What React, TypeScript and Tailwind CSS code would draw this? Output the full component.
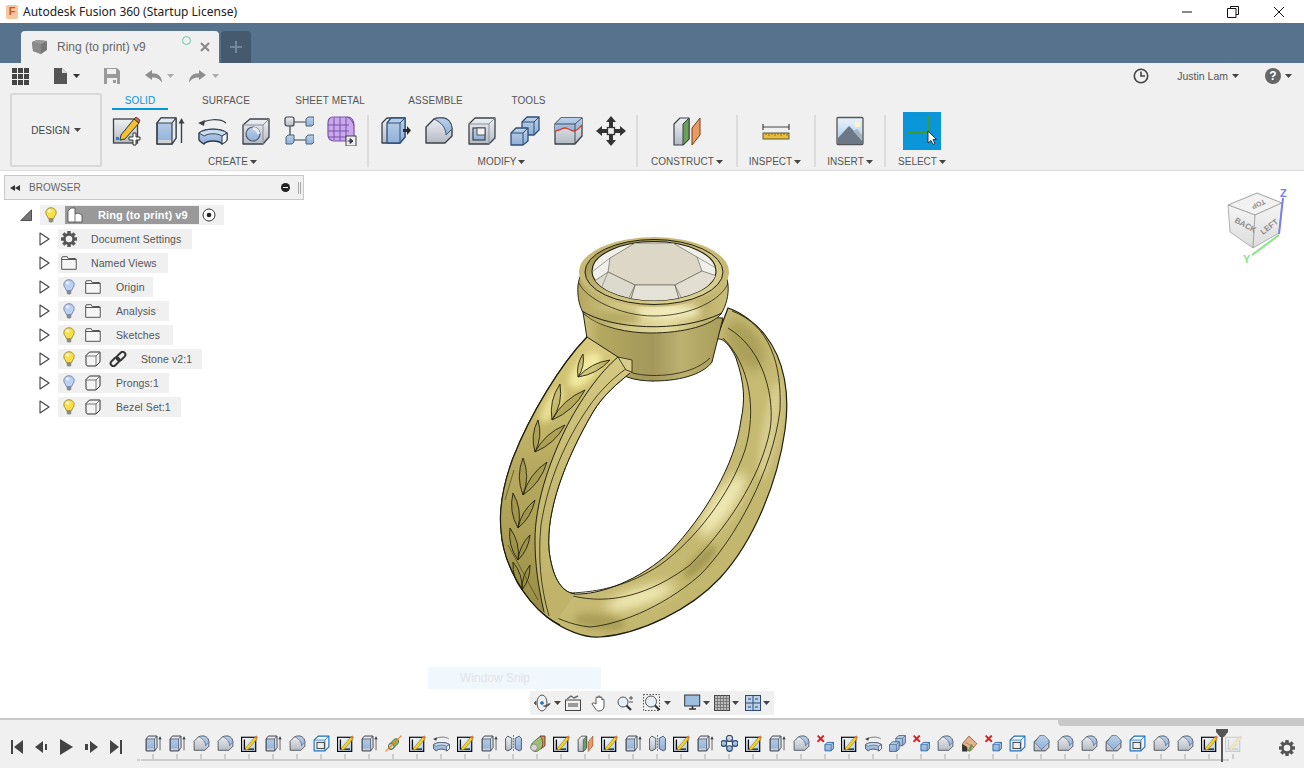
import React from "react";

const Ink = "#3c4149";
const Defs = () => (
  <svg className="absolute w-0 h-0">
    <defs>
      <linearGradient id="bl" x1="0" y1="0" x2="0" y2="1"><stop offset="0" stopColor="#bcd0e8" /><stop offset="1" stopColor="#8fb0d8" /></linearGradient>
      <linearGradient id="gy" x1="0" y1="0" x2="0" y2="1"><stop offset="0" stopColor="#eef0f3" /><stop offset="1" stopColor="#b4bac4" /></linearGradient>
      <linearGradient id="sk" x1="0" y1="0" x2="1" y2="1"><stop offset="0" stopColor="#ffffff" /><stop offset="1" stopColor="#a9c6e6" /></linearGradient>
      <linearGradient id="pic" x1="0" y1="0" x2="0" y2="1"><stop offset="0" stopColor="#e8f2fb" /><stop offset="1" stopColor="#a8c8e8" /></linearGradient>
    </defs>
  </svg>
);

const Caret = ({ c = "#444" }: { c?: string }) => (
  <svg width="7" height="4" viewBox="0 0 7 4" className="shrink-0"><path d="M0 0h7L3.5 4z" fill={c} /></svg>
);

const V = ({ s = 30, children }: { s?: number; children: React.ReactNode }) => (
  <svg width={s} height={s} viewBox="0 0 30 30" className="shrink-0">{children}</svg>
);

const Extrude = ({ s }: { s?: number }) => (
  <V s={s}>
    <path d="M2 7l4-5h15v20l-4 6H2z" fill="url(#bl)" stroke={Ink} strokeWidth="1.4" strokeLinejoin="round" />
    <path d="M17 7l4-5v20l-4 6z" fill="#e4eaf2" />
    <path d="M2 7l4-5h15l-4 5z" fill="#dfe8f3" />
    <path d="M2.8 24h14v3.4h-14z" fill="#cfd3d8" />
    <path d="M2 7l4-5h15v20l-4 6H2zM2 7h15v21M17 7l4-5" fill="none" stroke={Ink} strokeWidth="1.2" strokeLinejoin="round" />
    <path d="M26.500 27V6" stroke={Ink} strokeWidth="1.4" />
    <path d="M26.500 2l3 5.500h-6z" fill={Ink} />
  </V>
);
const Revolve = ({ s }: { s?: number }) => (
  <V s={s}>
    <path d="M3 8c5-5 19-6 25-1" fill="none" stroke={Ink} strokeWidth="1.2" />
    <path d="M0 7l7-3-1 6z" fill={Ink} />
    <path d="M1 17c6-5 22-5 28 0v7c-1 2-3 3-5 4-3-4-15-4-18 0-2-1-4-2-5-4z" fill="url(#bl)" stroke="#2f3b4d" strokeWidth="1.4" strokeLinejoin="round" />
    <path d="M1 17c6-5 22-5 28 0l-5 3c-5-3-13-3-18 0z" fill="#cbdcef" stroke="#2f3b4d" strokeWidth=".9" />
    <path d="M24 20l5-3v7c-1 2-3 3-5 4z" fill="#f3f5f8" stroke="#2f3b4d" strokeWidth="1" />
  </V>
);
const Hole = () => (
  <V>
    <path d="M2 9l7-6h19v18l-6 7H2z" fill="url(#gy)" stroke={Ink} strokeWidth="1.3" strokeLinejoin="round" />
    <path d="M2 9h20v19M22 9l6-6" fill="none" stroke="#8a9099" strokeWidth="1" />
    <circle cx="12" cy="18" r="7" fill="url(#bl)" stroke="#4d5a6d" strokeWidth="1.2" />
    <path d="M12 11c5 0 7 4 7 7h-3c0-2-2-4-4-4z" fill="#e8ebef" />
  </V>
);
const Joint = () => (
  <V>
    <path d="M8 6h16M8 24h16M6 8v14" stroke={Ink} strokeWidth="1.2" />
    <rect x="1" y="1" width="9" height="9" rx="2" fill="url(#gy)" stroke={Ink} strokeWidth="1.2" />
    <path d="M22 3l2-2h6v7l-2 2h-6z" fill="url(#bl)" stroke="#47627f" strokeWidth="1" />
    <path d="M2 21l2-2h6v7l-2 2H2z" fill="url(#bl)" stroke="#47627f" strokeWidth="1" />
    <path d="M22 21l2-2h6v7l-2 2h-6z" fill="url(#bl)" stroke="#47627f" strokeWidth="1" />
  </V>
);
const Mesh = () => (
  <V>
    <path d="M6 1h14c5 0 7 4 7 9v10l-4 5H7c-4 0-6-3-6-6V7c0-4 2-6 5-6z" fill="#c9a8ec" stroke="#7a52ab" strokeWidth="1.2" />
    <path d="M1 9h21M1 15h21M1 21h21M7 2v22M13 1v24M19 1v24M20 1c4 2 6 5 7 9" stroke="#7a52ab" strokeWidth="1" fill="none" />
    <rect x="19" y="20" width="10" height="10" fill="#eee" stroke={Ink} strokeWidth="1" />
    <path d="M20.500 25h4M23 22.500l3 2.500-3 2.500z" stroke={Ink} fill={Ink} strokeWidth="1" />
  </V>
);
const PressPull = () => (
  <V>
    <path d="M1 7l5-5h18v19l-5 6H1z" fill="url(#gy)" stroke={Ink} strokeWidth="1.3" strokeLinejoin="round" />
    <path d="M6 7l4-5h14v19l-5 6H6z" fill="url(#bl)" stroke="#2e4f78" strokeWidth="1.3" strokeLinejoin="round" />
    <path d="M6 7h13v20M19 7l5-5" fill="none" stroke="#2e4f78" strokeWidth="1" />
    <path d="M22 13h4v-3l4 4.500-4 4.500v-3h-4z" fill="#2b2b2b" />
  </V>
);
const Fillet = ({ s }: { s?: number }) => (
  <V s={s}>
    <path d="M2 27V11l8-8c2-1 5-1 8-1 6 0 10 5 10 11v7l-7 7z" fill="url(#gy)" stroke={Ink} strokeWidth="1.4" strokeLinejoin="round" />
    <path d="M10 3c2-1 5-1 8-1 6 0 10 5 10 11l-6 6c0-7-4-12-12-16z" fill="url(#bl)" stroke="#44566f" strokeWidth="1" strokeLinejoin="round" />
  </V>
);
const ShellTool = () => (
  <V>
    <path d="M2 8l6-6h20v20l-6 6H2z" fill="url(#gy)" stroke={Ink} strokeWidth="1.3" strokeLinejoin="round" />
    <path d="M2 8h20v20M22 8l6-6" fill="none" stroke="#8a9099" strokeWidth="1" />
    <rect x="6" y="12" width="12" height="12" fill="url(#bl)" stroke={Ink} strokeWidth="1.2" />
    <rect x="10" y="12" width="8" height="7" fill="#f2f2f2" stroke="#555" strokeWidth="1" />
  </V>
);
const Combine = ({ s }: { s?: number }) => (
  <V s={s}>
    <path d="M12 6l5-5h12v13l-5 5H12z" fill="url(#bl)" stroke="#2e4f78" strokeWidth="1.3" strokeLinejoin="round" />
    <path d="M1 17l5-5h12v13l-5 4H1z" fill="url(#bl)" stroke="#2e4f78" strokeWidth="1.3" strokeLinejoin="round" />
    <path d="M1 17h12v12M13 17l5-5M12 6h12v13M24 6l5-5" fill="none" stroke="#2e4f78" strokeWidth="1" />
  </V>
);
const Replace = () => (
  <V>
    <path d="M2 8l6-6h21v18l-7 8H2z" fill="url(#gy)" stroke={Ink} strokeWidth="1.3" strokeLinejoin="round" />
    <path d="M2 8l6-6h21v7c-3 3-5 6-8 6-4 0-5-3-9-3-3 0-6 3-10 3z" fill="url(#bl)" />
    <path d="M2 15c4 0 7-3 10-3 4 0 5 3 9 3 3 0 5-3 8-6" fill="none" stroke="#d0402c" strokeWidth="1.3" />
    <path d="M2 8h20v20M22 8l7-6" fill="none" stroke={Ink} strokeWidth=".9" />
  </V>
);
const Move = () => (
  <V>
    <path d="M15 0l5 6h-3v5h-4V6h-3zM15 30l5-6h-3v-5h-4v5h-3zM0 15l6-5v3h5v4H6v3zM30 15l-6-5v3h-5v4h5v3z" fill="#333" />
    <rect x="11.500" y="11.500" width="7" height="7" fill="#eee" stroke="#333" strokeWidth="1.3" />
  </V>
);
const Construct = () => (
  <V>
    <path d="M2 8l6-6h9v21l-6 6H2z" fill="url(#gy)" stroke={Ink} strokeWidth="1.2" strokeLinejoin="round" />
    <path d="M11 8l6-6v21l-6 6z" fill="#6aa05a" stroke={Ink} strokeWidth="1" />
    <path d="M20 12l8-10v17l-8 10z" fill="#ea9a62" stroke="#7a3a1a" strokeWidth="1" />
  </V>
);
const Ruler = () => (
  <V>
    <path d="M2 8v6M2 11h26M28 8v6" stroke="#444" strokeWidth="1.2" fill="none" />
    <rect x="2" y="17" width="26" height="6" fill="#e8bd3c" stroke="#5b5b3a" strokeWidth="1" />
    <path d="M5 17v2M8 17v3M11 17v2M14 17v3M17 17v2M20 17v3M23 17v2M26 17v3" stroke="#7a6420" strokeWidth=".8" />
  </V>
);
const Picture = () => (
  <V>
    <rect x="2" y="1.500" width="26" height="27" fill="url(#pic)" stroke="#555" strokeWidth="1.3" rx="1" />
    <rect x="20" y="6" width="5" height="5" fill="#fff3c0" />
    <path d="M3 22l11-12 14 14v4H3z" fill="#6d7886" />
    <path d="M18 15l4-2 5 6v6z" fill="#a8b4c0" />
  </V>
);
const SelectIcon = () => (
  <div className="relative w-[38px] h-[38px] bg-[#0b96d9]">
    <svg width="24" height="20" viewBox="0 0 24 20" className="absolute left-[4px] top-[3px]"><rect x="0.500" y="0.500" width="21" height="17" fill="none" stroke="#3f9a2e" strokeWidth="1" /></svg>
    <svg width="10" height="16" viewBox="0 0 10 16" className="absolute left-[24px] top-[18px]"><path d="M1 1v12l3-2.500 2 4 2-1-2-4h3.500z" fill="#fff" stroke="#222" strokeWidth=".9" /></svg>
  </div>
);
const SketchBig = () => (
  <V>
    <rect x="1.500" y="3" width="24" height="24" fill="url(#gy)" stroke={Ink} strokeWidth="1.3" />
    <rect x="4" y="21" width="3" height="3" fill="#2a80d0" />
    <path d="M9 19L22 3l5 4-14 16-5 1z" fill="#f1c232" stroke="#333" strokeWidth="1" strokeLinejoin="round" />
    <path d="M22 3l2-2 4 3-1 3z" fill="#d9694a" stroke="#333" strokeWidth=".8" />
    <path d="M21 17h3v4h4v3h-4v5h-3v-5h-4v-3h4z" fill="#fff" stroke="#333" strokeWidth="1" />
  </V>
);

const Sketch = ({ s = 17, faded }: { s?: number; faded?: boolean }) => (
  <V s={s}>
    <g opacity={faded ? 0.25 : 1}>
      <rect x="1" y="4" width="25" height="25" fill="url(#sk)" stroke={faded ? "#666" : "#000"} strokeWidth="2" />
      <path d="M6 8v17h17" fill="none" stroke={faded ? "#666" : "#111"} strokeWidth="2.400" />
      <path d="M8 23L24 4l4 3L13 25l-5 2z" fill="#f5d020" stroke="#7a6a10" strokeWidth=".8" />
      <path d="M24 4l3-3 3 3-2 3z" fill="#e07a3c" />
    </g>
  </V>
);
const Shell = ({ s = 17 }: { s?: number }) => (
  <V s={s}>
    <path d="M2 9l7-7h19v19l-7 7H2z" fill="#f4f7fb" stroke="#1a6fc4" strokeWidth="2" strokeLinejoin="round" />
    <path d="M2 9h19v19M21 9l7-7" fill="none" stroke="#1a6fc4" strokeWidth="1.400" />
    <rect x="7" y="13" width="13" height="11" fill="#eee" stroke="#333" strokeWidth="1.600" />
  </V>
);
const Chamfer = ({ s = 17 }: { s?: number }) => (
  <V s={s}>
    <path d="M2 12L12 2h8l8 8v12l-6 6H2z" fill="url(#gy)" stroke={Ink} strokeWidth="1.600" strokeLinejoin="round" />
    <path d="M12 2h8l8 8v4L15 27 3 14z" fill="url(#bl)" stroke="#44566f" strokeWidth="1" transform="translate(0 -1)" />
  </V>
);
const Del = ({ s = 17 }: { s?: number }) => (
  <V s={s}>
    <path d="M1 1l11 11M12 1L1 12" stroke="#d81e1e" strokeWidth="3.400" />
    <path d="M14 17l4-4h11v11l-4 4H14z" fill="url(#bl)" stroke="#2468a8" strokeWidth="1.600" strokeLinejoin="round" />
    <path d="M14 17h11v11M25 17l4-4" fill="none" stroke="#2468a8" strokeWidth="1.200" />
  </V>
);
const Mirror = ({ s = 17 }: { s?: number }) => (
  <V s={s}>
    <path d="M15 0v30" stroke="#444" strokeWidth="1.300" strokeDasharray="3 2" />
    <path d="M12 6L5 2 1 6v20l4 2 7-4z" fill="url(#gy)" stroke={Ink} strokeWidth="1.500" strokeLinejoin="round" />
    <path d="M18 6l7-4 4 4v20l-4 2-7-4z" fill="url(#bl)" stroke="#2f4a70" strokeWidth="1.500" strokeLinejoin="round" />
  </V>
);
const Pattern = ({ s = 17 }: { s?: number }) => (
  <V s={s}>
    <path d="M15 8L4 15l11 9 11-9z" fill="none" stroke="#2f4a70" strokeWidth="2" />
    <circle cx="15" cy="6" r="5.400" fill="url(#gy)" stroke="#2f4a70" strokeWidth="2" />
    <circle cx="5" cy="15" r="5" fill="url(#bl)" stroke="#2f4a70" strokeWidth="2" />
    <circle cx="25" cy="15" r="5" fill="url(#bl)" stroke="#2f4a70" strokeWidth="2" />
    <circle cx="15" cy="24" r="5" fill="url(#bl)" stroke="#2f4a70" strokeWidth="2" />
  </V>
);
const Axis = ({ s = 17 }: { s?: number }) => (
  <V s={s}>
    <path d="M7 17l9-9c4-3 8-1 8 3s-1 4-2 5l-9 9c-3 2-9 0-6-8z" fill="#8ab45e" stroke="#3f5e2b" strokeWidth="1.500" />
    <circle cx="11" cy="20" r="5" fill="#cfd5c8" stroke="#3f5e2b" strokeWidth="1.300" />
    <path d="M1 29L29 1" stroke="#e8802c" strokeWidth="2" />
  </V>
);
const Loft = ({ s = 17 }: { s?: number }) => (
  <V s={s}>
    <path d="M6 14L20 2h8v17L14 29C4 30 0 22 6 14z" fill="#9dbf73" stroke="#46602f" strokeWidth="1.400" />
    <path d="M20 2h8v17l-6 5c4-8 2-16-2-22z" fill="#c89a62" stroke="#7a2f1a" strokeWidth="1.300" />
    <circle cx="9" cy="22" r="6" fill="#d6d6d0" stroke="#777" strokeWidth="1.200" />
  </V>
);
const Plane = ({ s = 17 }: { s?: number }) => <V s={s}><path d="M2 8l6-6h9v21l-6 6H2z" fill="url(#gy)" stroke={Ink} strokeWidth="1.500" strokeLinejoin="round" /><path d="M11 8l6-6v21l-6 6z" fill="#6aa05a" stroke={Ink} strokeWidth="1" /><path d="M20 12l8-10v17l-8 10z" fill="#ea9a62" stroke="#7a3a1a" strokeWidth="1" /></V>;
const Diamond = ({ s = 17 }: { s?: number }) => (
  <V s={s}>
    <path d="M3 25V15l11-13 14 13-11 13z" fill="#e6b48c" stroke="#8a5030" strokeWidth="1.400" />
    <path d="M8 13l15 9" stroke="#8a5030" strokeWidth="1" />
    <path d="M2 16l9 5v8H2z" fill="#333" />
    <path d="M12 28l6-12 3 2-6 12z" fill="#55a050" />
  </V>
);

type Key = "e" | "f" | "sh" | "s" | "x" | "r" | "m" | "l" | "p" | "t" | "c" | "d" | "ch" | "a" | "fs";
const seq: Key[] = ["e","e","f","f","s","e","f","sh","s","e","a","s","r","s","e","m","l","s","p","s","e","m","s","e","t","s","e","f","x","s","r","c","x","f","d","x","sh","ch","f","f","ch","sh","f","f","s","fs"];
const TL = ({ k }: { k: Key }) => {
  switch (k) {
    case "e": return <Extrude s={17} />;
    case "f": return <Fillet s={17} />;
    case "sh": return <Shell />;
    case "s": return <Sketch />;
    case "fs": return <Sketch faded />;
    case "x": return <Del />;
    case "r": return <Revolve s={17} />;
    case "m": return <Mirror />;
    case "l": return <Loft />;
    case "p": return <Plane />;
    case "t": return <Pattern />;
    case "c": return <Combine s={17} />;
    case "d": return <Diamond />;
    case "ch": return <Chamfer />;
    case "a": return <Axis />;
    default: return null;
  }
};

const Bulb = ({ on }: { on: boolean }) => (
  <svg width="12" height="16" viewBox="0 0 12 16" className="shrink-0">
    <path d="M6 .7C3 .7.8 2.900.8 5.500c0 2.700 2.200 3.700 2.500 6h5.400c.3-2.300 2.500-3.300 2.500-6C11.200 2.900 9 .7 6 .7z" fill={on ? "#f8e04a" : "#bcd0f4"} stroke={on ? "#9a8a30" : "#6f80a8"} strokeWidth=".9" />
    <path d="M3.700 12h4.600v2.500L7 15.500H5L3.700 14.500z" fill="#8a8a8a" />
    <ellipse cx="4.500" cy="4" rx="1.600" ry="1.400" fill="#fff" opacity=".75" />
  </svg>
);
const Folder = () => (
  <svg width="16" height="14" viewBox="0 0 16 14" className="shrink-0"><path d="M.7 13.300V1.700c0-.6.300-1 1-1h4.500l1 1.800h7c.6 0 1 .4 1 1v9.800zM.7 3.500h14.600" fill="#f6f6f6" stroke="#444" strokeWidth=".9" /></svg>
);
const Body = () => (
  <svg width="16" height="16" viewBox="0 0 16 16" className="shrink-0"><path d="M1 4.500L4.500 1H15v10l-4 4H3c-1.200 0-2-.8-2-2z" fill="#f4f4f4" stroke="#333" strokeWidth="1" strokeLinejoin="round" /><path d="M1 5h10v10M11 5l4-4" fill="none" stroke="#555" strokeWidth=".8" /></svg>
);
const Gear = ({ s = 16, c = "#555" }: { s?: number; c?: string }) => (
  <svg width={s} height={s} viewBox="0 0 16 16" className="shrink-0">
    <g fill={c}>
      {[0, 45, 90, 135, 180, 225, 270, 315].map((a) => (<rect key={a} x="6.300" y="0" width="3.400" height="4" transform={`rotate(${a} 8 8)`} />))}
    </g>
    <circle cx="8" cy="8" r="4.600" fill="none" stroke={c} strokeWidth="2.600" />
  </svg>
);
const Link = () => (
  <svg width="18" height="16" viewBox="0 0 18 16" className="shrink-0">
    <g fill="none" stroke="#333" strokeWidth="2">
      <rect x="1" y="8" width="10" height="5.500" rx="2.750" transform="rotate(-45 6 10.750)" />
      <rect x="7" y="2.500" width="10" height="5.500" rx="2.750" transform="rotate(-45 12 5.250)" />
    </g>
  </svg>
);
const RowArrow = () => (
  <svg width="11" height="14" viewBox="0 0 11 14" className="shrink-0"><path d="M1 1l9 6-9 6z" fill="#fff" stroke="#444" strokeWidth="1.100" strokeLinejoin="round" /></svg>
);

const S1 = ({ children }: { children: React.ReactNode }) => <span className="w-[22px] flex justify-center">{children}</span>;
const S2 = ({ children }: { children: React.ReactNode }) => <span className="w-[25px] flex justify-center">{children}</span>;
const rows: { w: number; cols: React.ReactNode[]; label: string }[] = [
  { w: 134, cols: [<S1><Gear /></S1>], label: "Document Settings" },
  { w: 110, cols: [<S1><Folder /></S1>], label: "Named Views" },
  { w: 95, cols: [<S1><Bulb on={false} /></S1>, <S2><Folder /></S2>], label: "Origin" },
  { w: 111, cols: [<S1><Bulb on={false} /></S1>, <S2><Folder /></S2>], label: "Analysis" },
  { w: 115, cols: [<S1><Bulb on /></S1>, <S2><Folder /></S2>], label: "Sketches" },
  { w: 144, cols: [<S1><Bulb on /></S1>, <S2><Body /></S2>, <S2><Link /></S2>], label: "Stone v2:1" },
  { w: 111, cols: [<S1><Bulb on={false} /></S1>, <S2><Body /></S2>], label: "Prongs:1" },
  { w: 123, cols: [<S1><Bulb on /></S1>, <S2><Body /></S2>], label: "Bezel Set:1" },
];

const leaves = [
  [578, 377, 583, 354, 610, 360],
  [552, 420, 560, 384, 585, 390],
  [535, 452, 538, 420, 565, 425],
  [523, 495, 523, 458, 547, 462],
  [518, 528, 513, 493, 535, 500],
  [518, 560, 510, 528, 530, 535],
  [522, 590, 513, 562, 530, 565],
];
const leafPath = (bx: number, by: number, tx: number, ty: number, k: number) => {
  const mx = (bx + tx) / 2, my = (by + ty) / 2, dx = tx - bx, dy = ty - by;
  return `M${bx} ${by}Q${mx - dy * k} ${my + dx * k} ${tx} ${ty}Q${mx + dy * k} ${my - dx * k} ${bx} ${by}Z`;
};

const bandOuter = "M587 337C560 365 530 415 513 458C503 485 499 510 501 530C503 565 525 600 547 617C565 631 585 638 600 637C640 634 690 610 720 578C755 540 778 480 785 430C790 395 785 360 765 335C755 322 740 312 728 308L716 340Z";
const bandHole = "M716 340C722 336 730 345 736 358C745 385 745 400 741 420C735 465 705 515 670 552C640 580 600 595 575 594C560 592 552 575 549 550C546 510 565 460 593 412C603 395 618 383 630 373L653 381Z";
const leftBand = "M587 337L618 357L632 360L632 372L630 373C618 383 603 395 593 412C565 460 546 510 549 550C552 575 560 592 575 594L556 622L544 612C525 600 505 565 501 530C499 510 503 485 513 458C530 415 560 365 587 337Z";
const face = "M587 337L618 357C600 372 580 400 565 430C548 465 535 505 535 540C535 565 538 585 544 612C525 600 505 565 501 530C499 510 503 485 513 458C530 415 560 365 587 337Z";
const capD = "M578 285C577 298 580 308 584 314C600 328 630 333 650 333C685 333 712 325 721 314C726 306 729 295 728 285C725 255 690 240 653 240C615 240 582 255 578 285Z";

const Ring = () => (
  <svg width="330" height="420" viewBox="480 225 330 420" className="absolute left-[480px] top-[54px]">
    <defs>
      <linearGradient id="bandG" x1="0" y1="0" x2="1" y2="1">
        <stop offset="0" stopColor="#bcaf66" /><stop offset=".45" stopColor="#c9bc76" /><stop offset="1" stopColor="#bfb268" />
      </linearGradient>
      <linearGradient id="leftG" x1="0" y1="0" x2="0" y2="1">
        <stop offset="0" stopColor="#d6ca85" /><stop offset=".5" stopColor="#c7ba72" /><stop offset="1" stopColor="#bfb268" />
      </linearGradient>
      <linearGradient id="faceG" x1="0" y1="0" x2="0" y2="1">
        <stop offset="0" stopColor="#d9cb80" /><stop offset=".2" stopColor="#cdbf6e" /><stop offset=".45" stopColor="#b8ab61" /><stop offset=".75" stopColor="#aa9e55" /><stop offset="1" stopColor="#988c44" />
      </linearGradient>
      <linearGradient id="cupG" x1="0" y1="0" x2="1" y2="0">
        <stop offset="0" stopColor="#cfc27e" /><stop offset=".12" stopColor="#b4a860" /><stop offset=".5" stopColor="#a3975a" /><stop offset=".7" stopColor="#bdb171" /><stop offset="1" stopColor="#a89c58" />
      </linearGradient>
      <linearGradient id="capG" x1="0" y1="0" x2="1" y2="0">
        <stop offset="0" stopColor="#b3a75f" /><stop offset=".25" stopColor="#cfc381" /><stop offset=".6" stopColor="#e4dba0" /><stop offset=".85" stopColor="#bfb26d" /><stop offset="1" stopColor="#cabe7b" />
      </linearGradient>
      <linearGradient id="rimG" x1="0" y1="0" x2="1" y2="1">
        <stop offset="0" stopColor="#8f8442" /><stop offset=".5" stopColor="#cbbf7b" /><stop offset="1" stopColor="#e0d79b" />
      </linearGradient>
      <filter id="bl8" x="-50%" y="-50%" width="200%" height="200%"><feGaussianBlur stdDeviation="6" /></filter>
      <filter id="bl4" x="-50%" y="-50%" width="200%" height="200%"><feGaussianBlur stdDeviation="3" /></filter>
      <clipPath id="bandC"><path d={bandOuter + bandHole} clipRule="evenodd" /></clipPath>
      <clipPath id="faceC"><path d={face} /></clipPath>
      <clipPath id="stoneC"><ellipse cx="654" cy="271" rx="62" ry="29.500" /></clipPath>
      <clipPath id="capC"><path d={capD} /></clipPath>
    </defs>

    <path d={bandOuter + bandHole} fill="url(#bandG)" fillRule="evenodd" />
    <g clipPath="url(#bandC)">
      <ellipse cx="722" cy="505" rx="11" ry="38" transform="rotate(35 722 505)" fill="#efe9b4" filter="url(#bl8)" />
      <ellipse cx="640" cy="597" rx="36" ry="8" transform="rotate(-18 640 597)" fill="#f3edb8" filter="url(#bl8)" />
      <ellipse cx="700" cy="562" rx="22" ry="6" transform="rotate(-45 700 562)" fill="#8f8440" opacity=".6" filter="url(#bl4)" />
      <ellipse cx="745" cy="345" rx="16" ry="28" transform="rotate(-30 745 345)" fill="#8f8440" opacity=".5" filter="url(#bl8)" />
      <ellipse cx="600" cy="622" rx="26" ry="8" transform="rotate(8 600 622)" fill="#a09450" opacity=".7" filter="url(#bl4)" />
      <ellipse cx="770" cy="430" rx="8" ry="50" transform="rotate(10 770 430)" fill="#d8cd8e" filter="url(#bl4)" />
    </g>
    <path d="M723 338C750 365 757 410 745 450C730 495 695 540 660 565C630 585 600 592 570 593" fill="none" stroke="#2a2813" strokeWidth=".9" />
    <path d="M728 328C765 350 775 400 770 430C760 480 725 530 690 565C650 595 610 605 573 596" fill="none" stroke="#2a2813" strokeWidth=".9" />
    <path d="M732 311C770 325 782 365 780 410C773 470 735 540 700 575C660 610 615 625 590 627C570 625 555 617 544 612" fill="none" stroke="#2a2813" strokeWidth=".9" />
    <path d={bandOuter} fill="none" stroke="#1e1c0c" strokeWidth="1.200" />
    <path d={bandHole} fill="none" stroke="#1e1c0c" strokeWidth="1" />

    <path d="M583 312L588 345L627 377C635 380 645 381 653 381C685 381 705 372 712 362L723 318Z" fill="url(#cupG)" stroke="#23210f" strokeWidth="1" />
    <path d="M630 372C645 378 690 378 710 358" fill="none" stroke="#23210f" strokeWidth=".8" />
    <path d={capD} fill="url(#capG)" stroke="#2a2813" strokeWidth="1" />
    <g clipPath="url(#capC)">
      <ellipse cx="668" cy="312" rx="32" ry="7" fill="#f1eab9" filter="url(#bl4)" />
      <ellipse cx="612" cy="318" rx="28" ry="6" fill="#b5a963" filter="url(#bl4)" />
    </g>
    <path d="M582 311C610 329 680 334 722 313" fill="none" stroke="#23210f" strokeWidth="1" />
    <ellipse cx="654" cy="272" rx="75" ry="35" fill="#c6ba76" />
    <path d="M579 283C585 298 620 316 654 316C690 316 722 300 728 283" fill="none" stroke="#2a2813" strokeWidth=".8" />
    <ellipse cx="654" cy="272" rx="69" ry="32.500" fill="url(#rimG)" stroke="#23210f" strokeWidth="1" />
    <ellipse cx="654" cy="271" rx="62" ry="29.500" fill="#f0efe9" stroke="#1e1c0c" strokeWidth="1.100" />
    <g clipPath="url(#stoneC)">
      <path d="M610 258L635 243H673L697 257L702 271L675 285H635L608 272Z" fill="#ddd7c7" stroke="#6b6a5f" strokeWidth=".7" />
      <path d="M635 285L630 302H680L675 285Z" fill="#e5e2d7" stroke="#6b6a5f" strokeWidth=".7" />
      <path d="M608 272L590 284L605 298L630 302L635 285Z" fill="#dcd9cd" stroke="#6b6a5f" strokeWidth=".7" />
      <path d="M675 285L680 302L700 295L717 276L702 271Z" fill="#e2dfd2" stroke="#6b6a5f" strokeWidth=".7" />
      <path d="M608 272L600 291M635 285L628 300M675 285L682 299M610 258L592 272M697 257L716 268" stroke="#6b6a5f" strokeWidth=".6" />
    </g>

    <path d={leftBand} fill="url(#leftG)" />
    <path d={face} fill="url(#faceG)" />
    <g clipPath="url(#faceC)">
      <ellipse cx="585" cy="370" rx="10" ry="22" transform="rotate(40 585 370)" fill="#f2e9a0" filter="url(#bl4)" />
      <ellipse cx="552" cy="405" rx="7" ry="20" transform="rotate(30 552 405)" fill="#eadf94" filter="url(#bl4)" />
    </g>
    {leaves.map((l, i) => (
      <g key={i} fill="#8c8139" fillOpacity=".35" stroke="#23210f" strokeWidth=".9">
        <path d={leafPath(l[0], l[1], l[2], l[3], 0.2)} />
        <path d={leafPath(l[0], l[1], l[4], l[5], 0.18)} />
      </g>
    ))}
    <path d="M505 500L514 470M508 545L538 600" stroke="#3a3618" strokeWidth=".6" fill="none" />
    <path d="M587 337L618 357C600 372 580 400 565 430C548 465 535 505 535 540C535 565 538 585 544 612" fill="none" stroke="#23210f" strokeWidth="1" />
    <path d="M630 366C615 376 600 390 588 408C566 440 548 480 541 525C538 555 540 585 549 616" fill="none" stroke="#23210f" strokeWidth=".8" />
    <path d="M618 357L632 360L632 372L626 370Z" fill="#d9cd8c" stroke="#23210f" strokeWidth=".8" />
    <path d="M587 337C560 365 530 415 513 458C503 485 499 510 501 530C503 565 525 600 547 617C552 621 556 623 560 625" fill="none" stroke="#1e1c0c" strokeWidth="1.200" />
    <path d="M630 373C618 383 603 395 593 412C565 460 546 510 549 550C552 575 560 592 575 594" fill="none" stroke="#1e1c0c" strokeWidth="1" />
  </svg>
);

const Cube = () => (
  <svg width="94" height="90" viewBox="1210 180 94 90" className="absolute left-[1210px] top-[9px]">
    <defs><linearGradient id="cf" x1="0" y1="0" x2="0" y2="1"><stop offset="0" stopColor="#f5f5f5" /><stop offset="1" stopColor="#dcdcdc" /></linearGradient></defs>
    <path d="M1257 193L1282 203L1255 215L1228 205Z" fill="#f2f2f2" stroke="#8a8a8a" strokeWidth=".8" />
    <path d="M1228 205L1255 215L1253 248L1230 232Z" fill="url(#cf)" stroke="#a0a0a0" strokeWidth=".8" />
    <path d="M1282 203L1255 215L1253 248L1279 233Z" fill="url(#cf)" stroke="#a0a0a0" strokeWidth=".8" />
    <path d="M1279 234L1283 198" stroke="#7c7cf0" strokeWidth="2" />
    <path d="M1279 235L1252 255" stroke="#86e486" strokeWidth="2" />
    <text x="1280" y="197" fontSize="11" fill="#7c7cf0" fontWeight="700" fontFamily="Liberation Sans, sans-serif">Z</text>
    <text x="1243" y="263" fontSize="11" fill="#86e486" fontWeight="700" fontFamily="Liberation Sans, sans-serif">Y</text>
    <text transform="translate(1234 222) rotate(28)" fontSize="8" fontWeight="700" fill="#8c8c8c" fontFamily="Liberation Sans, sans-serif">BACK</text>
    <text transform="translate(1263 235) rotate(-38)" fontSize="8" fontWeight="700" fill="#8c8c8c" fontFamily="Liberation Sans, sans-serif">LEFT</text>
    <text transform="translate(1264 199) rotate(155)" fontSize="7" fontWeight="700" fill="#8c8c8c" fontFamily="Liberation Sans, sans-serif">TOP</text>
  </svg>
);

const Label = ({ t, cls = "" }: { t: string; cls?: string }) => (
  <div className={`mt-[5px] flex items-center justify-center gap-[2px] h-[16px] text-[10px] text-[#555] leading-none ${cls}`}><span>{t}</span><Caret /></div>
);
const Sep = ({ cls = "" }: { cls?: string }) => <div className={`mt-[2px] w-[2px] h-[52px] bg-[#dcdcdc] ${cls}`} />;
const Cell = ({ children }: { children: React.ReactNode }) => <div className="w-[43px] h-[36px] flex items-center justify-center">{children}</div>;

export default function App() {
  return (
    <div className="w-[1304px] h-[768px] flex flex-col overflow-hidden bg-white relative font-['Liberation_Sans',Arial,sans-serif]">
      <Defs />
      {/* title bar */}
      <div className="h-[23px] flex items-center bg-white shrink-0">
        <div className="ml-[6px] w-[12px] h-[14px] rounded-[2px] bg-[#f6c79d] flex items-center justify-center text-[11px] font-bold leading-none text-[#c9581c]">F</div>
        <span className="ml-[5px] text-[12px] text-[#222] font-['Noto_Sans',sans-serif] leading-none">Autodesk Fusion 360 (Startup License)</span>
        <div className="ml-auto flex items-center">
          <svg width="12" height="12" viewBox="0 0 12 12" className="mr-[34px]"><path d="M1 6h10" stroke="#111" strokeWidth="1" /></svg>
          <svg width="12" height="12" viewBox="0 0 12 12" className="mr-[34px]"><path d="M3.500 2.500V.5h8v8H9M.5 2.500h8.500v9H.5z" fill="none" stroke="#111" strokeWidth="1" /></svg>
          <svg width="12" height="12" viewBox="0 0 12 12" className="mr-[19px]"><path d="M1 1l10 10M11 1L1 11" stroke="#111" strokeWidth="1" /></svg>
        </div>
      </div>
      {/* tab bar */}
      <div className="h-[40px] bg-[#56728c] flex items-end pl-[21px] gap-[2px] shrink-0">
        <div className="w-[198px] h-[32px] bg-[#f0f0f0] rounded-t-[4px] flex items-center relative">
          <svg width="17" height="17" viewBox="0 0 17 17" className="ml-[10px]"><path d="M1 3l5-2 10 1v9l-6 4-8-3z" fill="#777" /><path d="M1 3l9 2v10L2 12z" fill="#8a8a8a" /><path d="M1 3l5-2 10 1-6 3z" fill="#999" /></svg>
          <span className="ml-[9px] text-[12px] text-[#666] leading-none">Ring (to print) v9</span>
          <div className="absolute left-[161px] top-[5px] w-[9px] h-[9px] rounded-full border border-[#62c9a8]" />
          <svg width="10" height="10" viewBox="0 0 10 10" className="absolute left-[179px] top-[11px]"><path d="M1 1l8 8M9 1L1 9" stroke="#8a8a8a" strokeWidth="2.200" /></svg>
        </div>
        <div className="w-[30px] h-[32px] bg-[#45596f] rounded-t-[4px] flex items-center justify-center">
          <svg width="12" height="12" viewBox="0 0 12 12"><path d="M6 0v12M0 6h12" stroke="#74869a" strokeWidth="2" /></svg>
        </div>
      </div>
      {/* quick access */}
      <div className="h-[30px] bg-[#f0f0f0] flex items-center pb-[4px] shrink-0">
        <div className="ml-[12px] grid grid-cols-3 gap-[1px] w-[17px]">
          {Array.from({ length: 9 }).map((_, i) => <div key={i} className="w-[5px] h-[5px] bg-[#444]" />)}
        </div>
        <svg width="13" height="16" viewBox="0 0 13 16" className="ml-[25px]"><path d="M0 0h8l5 5v11H0z" fill="#555" /><path d="M8 0v5h5" fill="#ddd" /></svg>
        <span className="ml-[6px]"><Caret c="#333" /></span>
        <svg width="16" height="16" viewBox="0 0 16 16" className="ml-[24px]"><path d="M0 0h13l3 3v13H0z" fill="#9a9a9a" /><rect x="3" y="1" width="9" height="5" fill="#f0f0f0" /><rect x="3" y="10" width="10" height="6" fill="#f0f0f0" /><rect x="9" y="12" width="3" height="3" fill="#9a9a9a" /></svg>
        <svg width="17" height="13" viewBox="0 0 17 13" className="ml-[25px]"><path d="M0 5l7-5v3.200c6 0 10 3 10 9.800-2-4-5-5.500-10-5.500V10z" fill="#8e8e8e" /></svg>
        <span className="ml-[5px]"><Caret c="#aaa" /></span>
        <svg width="17" height="13" viewBox="0 0 17 13" className="ml-[15px]"><path d="M17 5l-7-5v3.200C4 3.200 0 6.200 0 13c2-4 5-5.500 10-5.500V10z" fill="#8e8e8e" /></svg>
        <span className="ml-[6px]"><Caret c="#aaa" /></span>
        <div className="ml-auto flex items-center">
          <svg width="16" height="16" viewBox="0 0 16 16" className="mr-[-1px]"><circle cx="8" cy="8" r="6.700" fill="none" stroke="#444" strokeWidth="1.600" /><path d="M8 3.500V8h4" fill="none" stroke="#444" strokeWidth="1.600" /></svg>
          <span className="ml-[29px] text-[10.5px] text-[#555] leading-none">Justin Lam</span>
          <span className="ml-[4px]"><Caret /></span>
          <div className="ml-[26px] w-[16px] h-[16px] rounded-full bg-[#666] text-white text-[12px] font-bold flex items-center justify-center leading-none">?</div>
          <span className="ml-[4px] mr-[12px]"><Caret /></span>
        </div>
      </div>
      {/* ribbon */}
      <div className="h-[78px] bg-[#f0f0f0] border-b border-[#dcdcdc] flex pl-[10px] shrink-0">
        <div className="w-[92px] h-[74px] border-2 border-[#d8d8d8] rounded-[2px] flex items-center justify-center gap-[4px] text-[10px] text-[#444] font-medium">DESIGN<Caret /></div>
        <div className="ml-[3px] flex flex-col">
          <div className="h-[17px] flex items-start text-[10px] text-[#555] leading-none tracking-[0.1px]">
            <div className="ml-[7px] w-[56px] h-[17px] text-center pt-[3px] text-[#0696d7] border-b-2 border-[#0696d7]">SOLID</div>
            <div className="ml-[30px] w-[56px] text-center pt-[3px]">SURFACE</div>
            <div className="ml-[38px] w-[76px] text-center pt-[3px]">SHEET METAL</div>
            <div className="ml-[36px] w-[63px] text-center pt-[3px]">ASSEMBLE</div>
            <div className="ml-[40px] w-[43px] text-center pt-[3px]">TOOLS</div>
          </div>
          <div className="flex items-start mt-[3px]">
            <div className="w-[258px]">
              <div className="flex">
                <Cell><SketchBig /></Cell><Cell><Extrude /></Cell><Cell><Revolve /></Cell><Cell><Hole /></Cell><Cell><Joint /></Cell><Cell><Mesh /></Cell>
              </div>
              <Label t="CREATE" cls="pr-[3px]" />
            </div>
            <Sep cls="ml-[4px]" />
            <div className="ml-[5px] w-[258px]">
              <div className="flex">
                <Cell><PressPull /></Cell><Cell><Fillet /></Cell><Cell><ShellTool /></Cell><Cell><Combine /></Cell><Cell><Replace /></Cell><Cell><Move /></Cell>
              </div>
              <Label t="MODIFY" cls="pr-[3px]" />
            </div>
            <Sep cls="ml-[4px]" />
            <div className="w-[98px]"><div className="h-[36px] flex items-center justify-center"><Construct /></div><Label t="CONSTRUCT" /></div>
            <Sep />
            <div className="w-[76px]"><div className="h-[36px] flex items-center justify-center"><Ruler /></div><Label t="INSPECT" cls="pr-[2px]" /></div>
            <Sep />
            <div className="w-[68px]"><div className="h-[36px] flex items-center justify-center"><Picture /></div><Label t="INSERT" /></div>
            <Sep />
            <div className="w-[72px]"><div className="h-[36px] flex items-center justify-center"><SelectIcon /></div><Label t="SELECT" /></div>
          </div>
        </div>
      </div>
      {/* canvas */}
      <div className="relative flex-1 bg-white">
        <div className="ml-[4px] mt-[4px] w-[300px] h-[25px] border border-[#c8c8c8] bg-[#f0f0f0] flex items-center text-[10px] text-[#666]">
          <svg width="10" height="6" viewBox="0 0 10 6" className="ml-[5px]"><path d="M5 0v6L0 3zM10 0v6L5 3z" fill="#333" /></svg>
          <span className="ml-[9px]">BROWSER</span>
          <div className="ml-auto w-[9px] h-[9px] rounded-full bg-[#222] flex items-center justify-center"><div className="w-[5px] h-[1px] bg-white" /></div>
          <div className="ml-[8px] mr-[2px] w-[3px] h-[12px] border-x border-[#aaa]" />
        </div>
        <div className="flex flex-col gap-[4px] mt-[5px] text-[10.5px] text-[#555] leading-none tracking-[0.1px]">
          <div className="h-[20px] flex items-center">
            <svg width="12" height="12" viewBox="0 0 12 12" className="ml-[20px]"><path d="M11.500 .8v10.700H.8z" fill="#777" stroke="#333" strokeWidth=".8" /></svg>
            <div className="ml-[8px] w-[184px] h-[20px] bg-[#f0f0f0] flex items-center">
              <span className="w-[22px] flex justify-center"><Bulb on /></span>
              <div className="ml-[3px] w-[134px] h-[18px] bg-[#999] flex items-center text-white font-bold text-[11px]">
                <svg width="16" height="16" viewBox="0 0 16 16" className="ml-[2px]"><path d="M1 15V4l3-3h4v6l3-1 4 2v7z" fill="#fff" stroke="#555" strokeWidth=".9" /><path d="M8 7v8" stroke="#555" strokeWidth=".8" /></svg>
                <span className="ml-[15px] whitespace-nowrap">Ring (to print) v9</span>
              </div>
              <svg width="14" height="14" viewBox="0 0 14 14" className="ml-[3px]"><circle cx="7" cy="7" r="6" fill="#fff" stroke="#333" strokeWidth="1" /><circle cx="7" cy="7" r="2.300" fill="#222" /></svg>
            </div>
          </div>
          {rows.map((r) => (
            <div key={r.label} className="h-[20px] flex items-center">
              <span className="ml-[39px] w-[11px] flex"><RowArrow /></span>
              <div style={{ width: r.w }} className="ml-[8px] h-[20px] bg-[#f0f0f0] flex items-center">
                {r.cols.map((c, i) => <React.Fragment key={i}>{c}</React.Fragment>)}
                <span className="ml-[11px] whitespace-nowrap">{r.label}</span>
              </div>
            </div>
          ))}
        </div>
        <Ring />
        <Cube />
        <div className="absolute left-[428px] top-[496px] w-[173px] h-[22px] bg-[#f0f7fd] text-[12px] text-[#e4e4e8] pl-[32px] flex items-center">Window Snip</div>
        <div className="absolute left-[530px] top-[520px] w-[244px] h-[24px] bg-[#f0f0f0] flex items-center">
          <svg width="18" height="18" viewBox="0 0 18 18" className="ml-[3px]"><ellipse cx="9" cy="9" rx="5" ry="8" fill="none" stroke="#555" strokeWidth="1" /><path d="M1 9l2-2v4zM17 9c0 3-4 4-7 3" fill="#555" stroke="#555" strokeWidth=".8" /><path d="M9 7v4M7 9h4" stroke="#1470c0" strokeWidth="1.400" /></svg>
          <span className="ml-[3px]"><Caret /></span>
          <svg width="16" height="16" viewBox="0 0 16 16" className="ml-[4px]"><rect x=".5" y="5" width="15" height="10.500" fill="#f0f0f0" stroke="#444" /><rect x="3" y="8" width="10" height="4" fill="#999" /><path d="M2 4l4-3 3 2 4-2" fill="none" stroke="#666" strokeWidth="1.400" /></svg>
          <svg width="16" height="17" viewBox="0 0 16 17" className="ml-[10px]"><path d="M5 9V3c0-1.500 2-1.500 2 0V2c0-1.500 2-1.500 2 0v1c0-1.500 2-1.500 2 0v2c0-1.300 2-1.300 2 0v6c0 3-2 5-5 5-2 0-3-1-4-3L1 9c0-1.300 2-1.500 3-.5z" fill="#fff" stroke="#444" strokeWidth=".9" /></svg>
          <svg width="18" height="16" viewBox="0 0 18 16" className="ml-[10px]"><circle cx="6" cy="7" r="5" fill="#e6f0fa" stroke="#555" /><path d="M9.500 10.500L14 15" stroke="#333" strokeWidth="2.200" /><path d="M14 1v4M12 3h4M12 7h4" stroke="#444" strokeWidth=".9" /></svg>
          <svg width="18" height="18" viewBox="0 0 18 18" className="ml-[8px]"><rect x=".5" y=".5" width="16" height="16" fill="none" stroke="#555" strokeDasharray="1.500 1.500" /><circle cx="8" cy="7.500" r="5.500" fill="#e6f0fa" stroke="#555" /><path d="M12 11.500l4.500 4.500" stroke="#333" strokeWidth="2.200" /></svg>
          <span className="ml-[3px]"><Caret /></span>
          <svg width="18" height="18" viewBox="0 0 18 18" className="ml-[13px]"><rect x=".7" y="1" width="15" height="11" fill="#9dbfe2" stroke="#333" /><path d="M5 15h7M8.500 12v3" stroke="#333" strokeWidth="1.500" /></svg>
          <span className="ml-[1px]"><Caret /></span>
          <svg width="16" height="16" viewBox="0 0 16 16" className="ml-[4px]"><rect x=".5" y=".5" width="15" height="15" fill="#bbb" stroke="#444" /><path d="M3.500 0v16M6.500 0v16M9.500 0v16M12.500 0v16M0 3.500h16M0 6.500h16M0 9.500h16M0 12.500h16" stroke="#666" strokeWidth=".7" /></svg>
          <span className="ml-[2px]"><Caret /></span>
          <svg width="16" height="16" viewBox="0 0 16 16" className="ml-[6px]"><rect x=".5" y=".5" width="15" height="15" fill="#bcd0e8" stroke="#2f4a70" /><path d="M8 0v16M0 8h16" stroke="#2f4a70" /><path d="M3 4h3M10 4h3M3 12h3M10 12h3" stroke="#2f4a70" /></svg>
          <span className="ml-[2px]"><Caret /></span>
        </div>
      </div>
      {/* timeline */}
      <div className="relative h-[50px] shrink-0 bg-[#f0f0f0] border-t-2 border-[#c8c8c8] flex">
        <div className="absolute left-[1058px] top-0 right-0 h-[6px] bg-[#c8c8c8] rounded-bl-[4px]" />
        <div className="flex items-center h-[46px] pl-[11px] gap-[12px] w-[141px] shrink-0 pt-[8px]">
          <svg width="12" height="14" viewBox="0 0 12 14"><path d="M0 0h2v14H0zM12 0v14L3 7z" fill="#444" /></svg>
          <svg width="13" height="12" viewBox="0 0 13 12"><path d="M8 0v12L0 6zM10 3h2v6h-2z" fill="#444" /></svg>
          <svg width="13" height="16" viewBox="0 0 13 16"><path d="M0 0l13 8-13 8z" fill="#444" /></svg>
          <svg width="13" height="12" viewBox="0 0 13 12"><path d="M5 0v12l8-6zM0 3h3v6H0z" fill="#444" /></svg>
          <svg width="12" height="14" viewBox="0 0 12 14"><path d="M10 0h2v14h-2zM0 0v14l9-7z" fill="#444" /></svg>
        </div>
        <div className="flex flex-col mt-[15px]">
          <div className="flex">
            {seq.map((k, i) => (
              <div key={i} className="w-[24px] flex flex-col items-center shrink-0">
                <TL k={k} />
                <div className="w-[2px] h-[5px] mt-[2px] bg-[#cdcdcd]" />
              </div>
            ))}
          </div>
          <div className="w-[1088px] h-[2px] bg-[#cdcdcd]" />
        </div>
        <div className="absolute left-[137px] top-[39px] w-[10px] h-[2px] bg-[repeating-linear-gradient(90deg,#cdcdcd_0_3px,transparent_3px_5px)]" />
        <div className="absolute left-[1221px] top-[10px] w-[2px] h-[32px] bg-[#555]" />
        <svg width="12" height="8" viewBox="0 0 12 8" className="absolute left-[1216px] top-[9px]"><path d="M0 0h12v3L8 8H4L0 3z" fill="#555" /></svg>
        <div className="ml-auto mr-[9px] mt-[20px]"><Gear s={16} c="#555" /></div>
      </div>
    </div>
  );
}
